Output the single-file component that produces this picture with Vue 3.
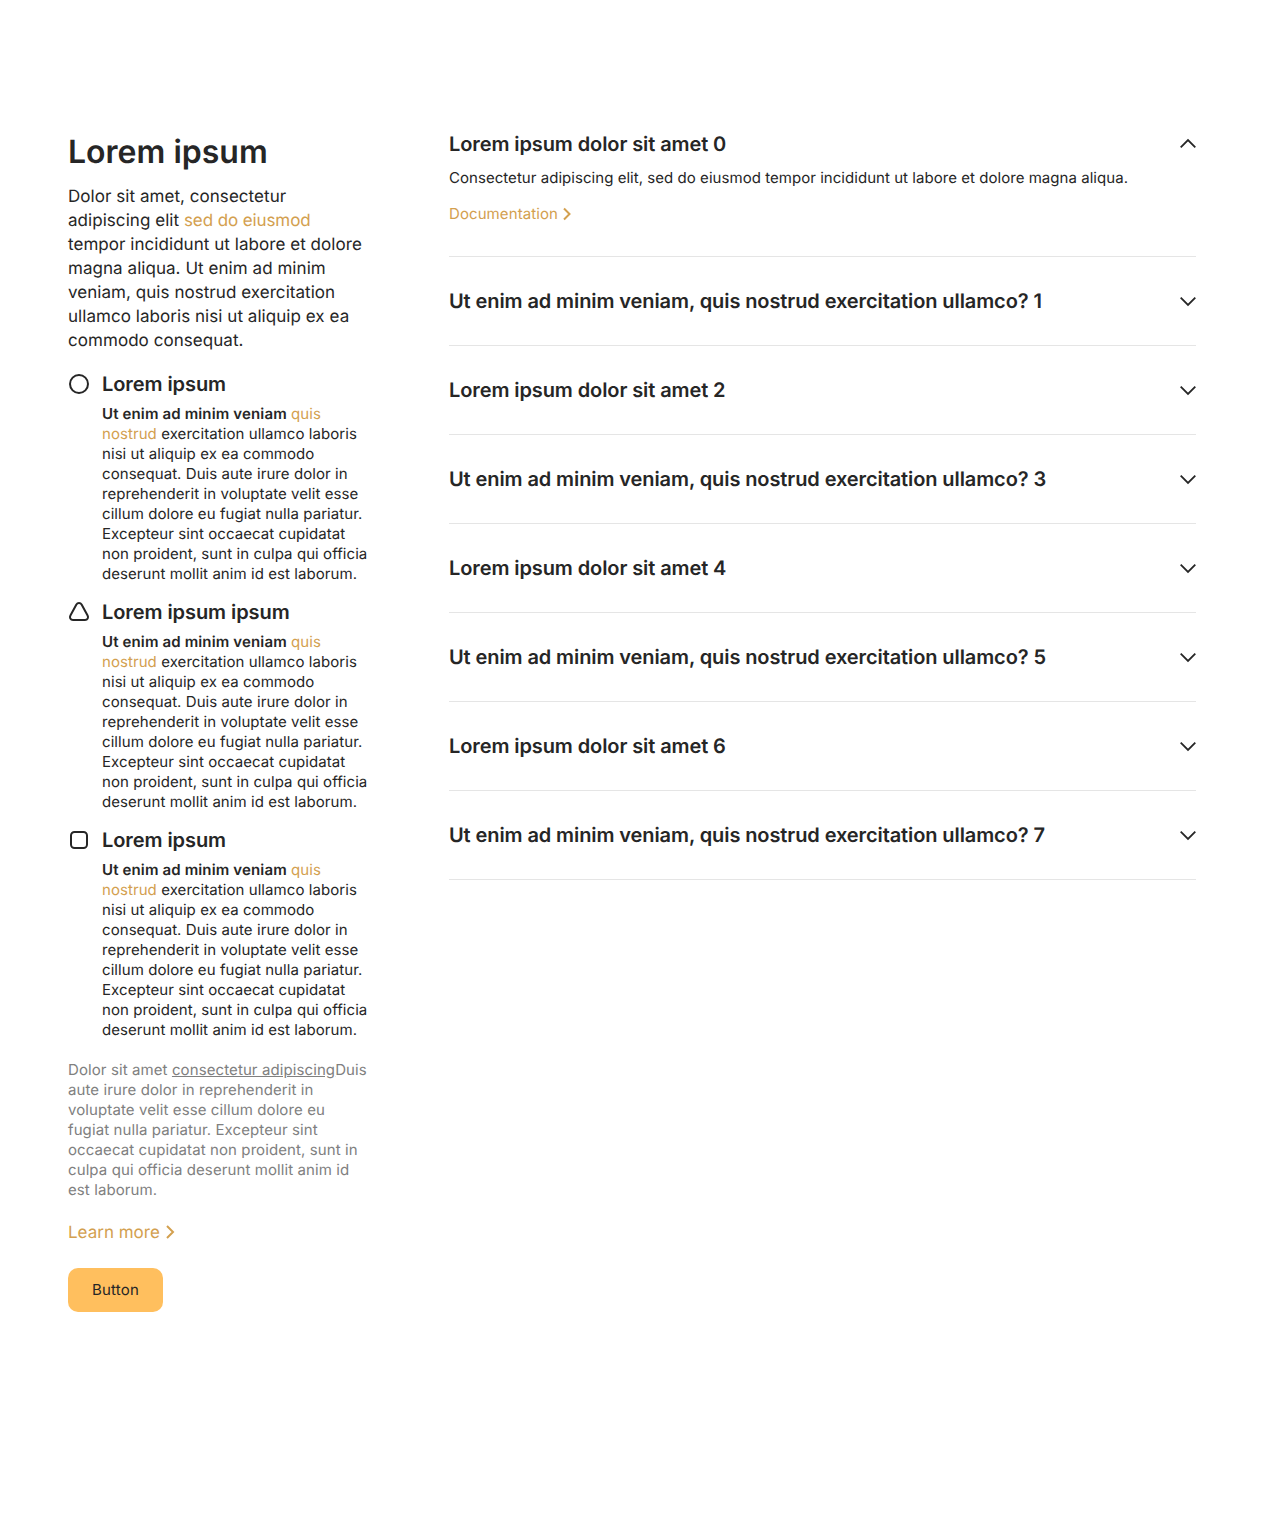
<script setup>
import { ref } from 'vue'

const features = [
  { title: 'Lorem ipsum', icon: 'circle' },
  { title: 'Lorem ipsum ipsum', icon: 'triangle' },
  { title: 'Lorem ipsum', icon: 'square' },
]
const questions = Array.from({ length: 8 }, (_, i) =>
  i % 2 ? `Ut enim ad minim veniam, quis nostrud exercitation ullamco? ${i}` : `Lorem ipsum dolor sit amet ${i}`
)
const open = ref(0)
</script>

<template>
  <main class="page">
    <aside class="side">
      <h2 class="title">Lorem ipsum</h2>
      <p class="lead">
        Dolor sit amet, consectetur adipiscing elit <a class="tight">sed do eiusmod</a> tempor incididunt ut labore et dolore magna
        aliqua. Ut enim ad minim veniam, quis nostrud exercitation ullamco laboris nisi ut aliquip ex ea commodo
        consequat.
      </p>
      <section v-for="(f, i) in features" :key="i" class="feature">
        <svg class="shape" viewBox="0 0 22 22" width="22" height="22" fill="none" stroke="currentColor" stroke-width="2">
          <circle v-if="f.icon === 'circle'" cx="11" cy="11" r="9" />
          <path
            v-else-if="f.icon === 'triangle'"
            stroke-linejoin="round"
            d="M8.4 3.5 2.4 14.5C1.2 16.8 2.5 19 5 19H17C19.500 19 20.800 16.800 19.600 14.500L13.600 3.500C12.400 1.500 9.600 1.500 8.400 3.500Z"
          />
          <rect v-else x="3" y="3" width="16" height="16" rx="3.5" />
        </svg>
        <div>
          <h3 class="feature-title">{{ f.title }}</h3>
          <p class="feature-text">
            <b>Ut enim ad minim veniam</b> <a>quis nostrud</a> exercitation ullamco laboris nisi ut aliquip ex ea commodo
            consequat. Duis aute irure dolor in reprehenderit in voluptate velit esse cillum dolore eu fugiat nulla
            pariatur. Excepteur sint occaecat cupidatat non proident, sunt in culpa qui officia deserunt mollit anim id
            est laborum.
          </p>
        </div>
      </section>
      <p class="note">
        Dolor sit amet <u>consectetur adipiscing</u>Duis aute irure dolor in reprehenderit in voluptate velit esse cillum
        dolore eu fugiat nulla pariatur. Excepteur sint occaecat cupidatat non proident, sunt in culpa qui officia
        deserunt mollit anim id est laborum.
      </p>
      <a class="more">
        Learn more
        <svg viewBox="0 0 10 16" width="10" height="16"><path d="M2 2 8 8 2 14" /></svg>
      </a>
      <button class="button">Button</button>
    </aside>

    <div class="list">
      <section v-for="(q, i) in questions" :key="i" class="item">
        <h3 class="question" @click="open = open === i ? -1 : i">
          {{ q }}
          <svg :class="['chevron', { up: open === i }]" viewBox="0 0 16 10" width="16" height="10">
            <path d="M.7 1.600 8 8.900 15.300 1.600" />
          </svg>
        </h3>
        <div v-if="open === i" class="answer">
          <p>Consectetur adipiscing elit, sed do eiusmod tempor incididunt ut labore et dolore magna aliqua.</p>
          <a class="doc">
            Documentation
            <svg viewBox="0 0 8 14" width="8" height="14"><path d="M1 1.500 6.500 7 1 12.500" /></svg>
          </a>
        </div>
      </section>
    </div>
  </main>
</template>

<style>
body {
  background: #fff;
}
</style>

<style scoped>
.page {
  display: flex;
  align-items: flex-start;
  gap: 81px;
  box-sizing: border-box;
  min-height: 1532px;
  padding: 132px 68px 0;
  font-family: Inter, sans-serif;
  font-size: 15px;
  line-height: 20px;
  color: #262626;
  text-rendering: geometricPrecision;
}
h2,
h3,
p {
  margin: 0;
}
a {
  color: #d3a04f;
}
svg {
  flex: none;
  fill: none;
  stroke: currentColor;
  overflow: visible;
}
.side {
  flex: none;
  width: 300px;
}
.title {
  font-size: 32px;
  line-height: 40px;
  font-weight: 600;
}
.lead {
  margin: 13px 0 19px;
  font-size: 17px;
  line-height: 24px;
  letter-spacing: 0.05px;
}
.tight {
  letter-spacing: -0.1px;
}
.feature {
  display: flex;
  gap: 12px;
  margin-bottom: 16px;
}
.shape {
  margin-top: 1px;
}
.feature-title {
  margin-bottom: 8px;
  font-size: 20px;
  line-height: 24px;
  font-weight: 600;
  letter-spacing: -0.07px;
}
.feature-text {
  letter-spacing: 0.07px;
}
b {
  font-weight: 600;
  letter-spacing: 0.14px;
}
.note {
  margin-top: 20px;
  color: #808080;
  letter-spacing: 0.1px;
}
.more {
  display: flex;
  align-items: center;
  gap: 5px;
  margin: 21px 0 23px;
  font-size: 17px;
  line-height: 24px;
}
.more svg {
  margin-bottom: 2px;
}
.more svg,
.doc svg {
  stroke-width: 2;
}
.button {
  display: block;
  width: 95px;
  height: 44px;
  padding: 0;
  border: 0;
  border-radius: 10px;
  background: #ffbf5e;
  color: #262626;
  font: 15px/20px Inter, sans-serif;
  letter-spacing: 0.2px;
  text-rendering: inherit;
}
.list {
  flex: 1;
}
.item {
  padding: 32px 0;
  border-bottom: 1px solid #e5e5e5;
}
.item:first-child {
  padding-top: 0;
}
.question {
  display: flex;
  align-items: center;
  justify-content: space-between;
  font-size: 20px;
  line-height: 24px;
  font-weight: 600;
  letter-spacing: -0.095px;
}
.chevron {
  stroke-width: 1.8;
}
.up {
  transform: rotate(180deg);
}
.answer {
  padding-top: 12px;
  letter-spacing: 0.043px;
}
.doc {
  display: flex;
  align-items: center;
  gap: 5px;
  margin-top: 16px;
  letter-spacing: 0.09px;
}
</style>
